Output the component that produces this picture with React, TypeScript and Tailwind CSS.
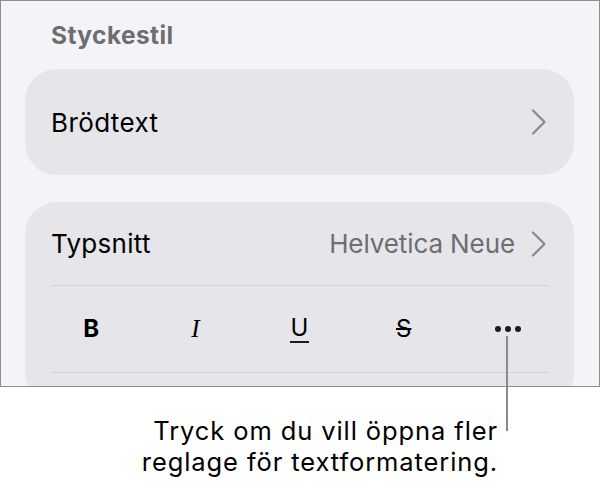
const font = { fontFamily: 'Inter, "Liberation Sans", sans-serif' };

function Chevron() {
  return (
    <svg width="16" height="26" viewBox="0 0 16 26" fill="none" aria-hidden>
      <path d="M2 1.5 13.5 13 2 24.5" stroke="#8a8a8e" strokeWidth={2.2} strokeLinecap="round" strokeLinejoin="round" />
    </svg>
  );
}

export default function App() {
  return (
    <div className="relative w-[601px] h-[483px] bg-white text-black" style={font}>
      <div className="w-[600px] h-[387px] border border-[#8e8e8e] bg-[#f4f4f8] overflow-hidden pl-[24px] pr-[25px]">
        <h2 className="pl-[26px] pt-[19px] text-[24.5px] leading-[30px] font-bold text-[#6d6d72] tracking-[0.4px]">Styckestil</h2>

        <button
          type="button"
          className="mt-[19px] w-full h-[106px] rounded-[32px] bg-[#e5e5ea] flex items-center justify-between pl-[26px] pr-[27px]"
        >
          <span className="text-[26px] tracking-[0.4px]">Brödtext</span>
          <Chevron />
        </button>

        <div className="mt-[27px] w-full rounded-[32px] bg-[#e5e5ea] pl-[26px] pr-[25px] pb-8">
          <div className="h-[84px] flex items-center justify-between border-b border-[#d1d1d6]">
            <span className="text-[26px] tracking-[0.3px]">Typsnitt</span>
            <span className="flex items-center gap-[16px] pr-[2px]">
              <span className="text-[26px] text-[#6d6d72] tracking-[-0.1px]">Helvetica Neue</span>
              <Chevron />
            </span>
          </div>
          <div className="border-b border-[#d1d1d6]">
            <div className="h-[86px] -ml-[12px] -mr-[11px] grid grid-cols-5 items-center">
              <span className="text-center text-[24px] font-bold">B</span>
              <span
                className="text-center text-[25px] italic"
                style={{ fontFamily: '"Liberation Serif", serif' }}
              >
                I
              </span>
              <span className="flex justify-center">
                <span className="text-[24px] leading-[26px] border-b-2 border-[#1c1c1e] px-[1px]">U</span>
              </span>
              <span className="flex justify-center">
                <span className="text-[24px] line-through decoration-2">S</span>
              </span>
              <span className="flex justify-center gap-[4px]">
                <span className="w-[6px] h-[6px] rounded-full bg-[#1c1c1e]" />
                <span className="w-[6px] h-[6px] rounded-full bg-[#1c1c1e]" />
                <span className="w-[6px] h-[6px] rounded-full bg-[#1c1c1e]" />
              </span>
            </div>
          </div>
        </div>
      </div>

      <div className="absolute left-[506px] top-[336px] w-[2px] h-[95px] bg-[#8a8a8a]" />

      <p className="pr-[103px] pt-[28px] text-right text-[25.5px] leading-[31px] tracking-[0.9px]">
        Tryck om du vill öppna fler
        <br />
        reglage för textformatering.
      </p>
    </div>
  );
}
